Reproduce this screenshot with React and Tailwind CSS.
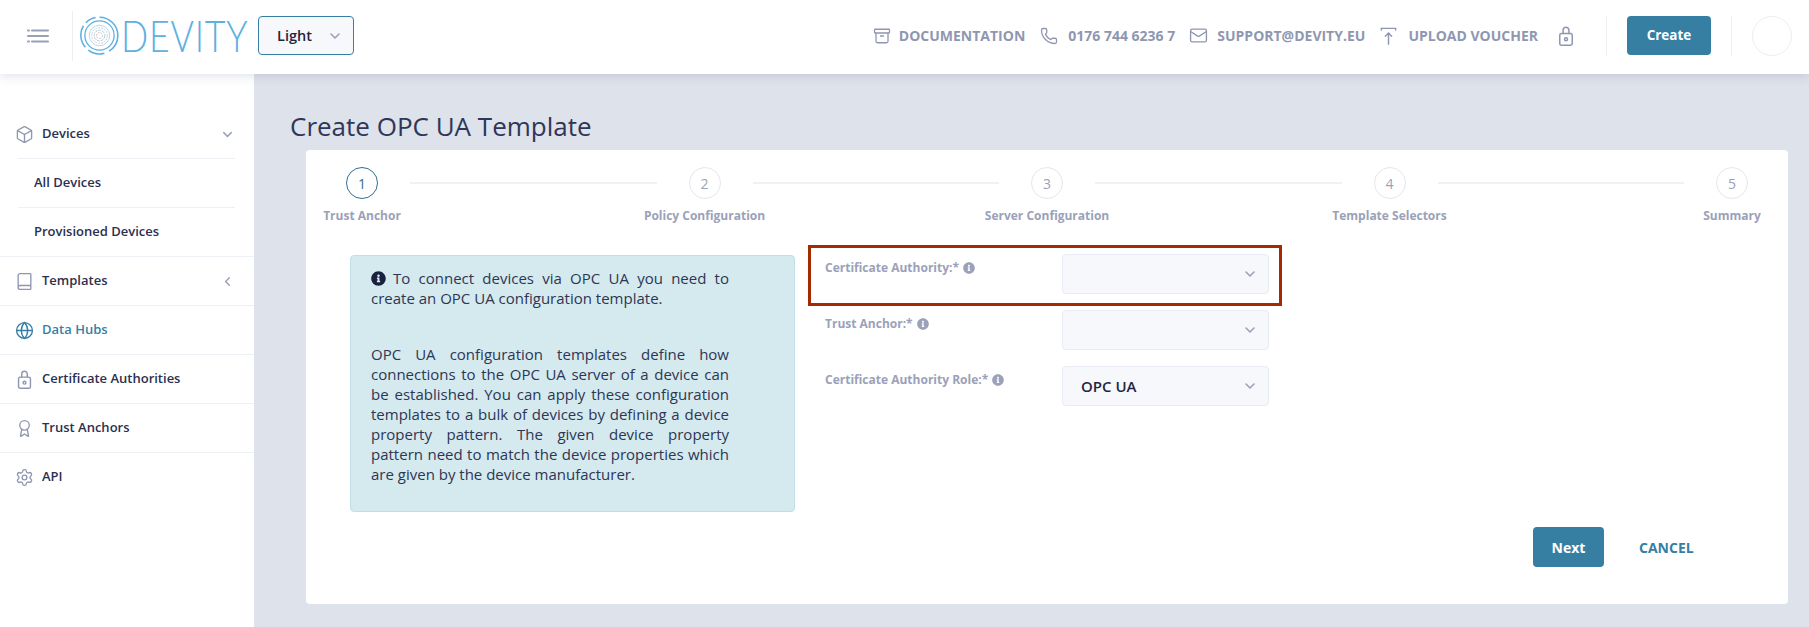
import { Archive, Award, Book, Box, ChevronDown, ChevronLeft, Globe, Mail, Phone, Settings } from 'lucide-react';
import { FaInfoCircle } from 'react-icons/fa';

const navItems = [
  { label: 'Templates', icon: Book, caret: true },
  { label: 'Data Hubs', icon: Globe, active: true },
  { label: 'Certificate Authorities', icon: LockIcon },
  { label: 'Trust Anchors', icon: Award },
  { label: 'API', icon: Settings, last: true },
];

const steps = ['Trust Anchor', 'Policy Configuration', 'Server Configuration', 'Template Selectors', 'Summary'];

function LockIcon({ className }) {
  return (
    <svg viewBox="0 0 24 24" fill="none" stroke="currentColor" strokeWidth="1.8" strokeLinecap="round" strokeLinejoin="round" className={className}>
      <rect x="4.5" y="9" width="15" height="14" rx="2" />
      <path d="M8.5 9V5a3.5 3.5 0 0 1 7 0v4" />
      <circle cx="12" cy="16" r="1.8" />
    </svg>
  );
}

function UploadIcon({ className }) {
  return (
    <svg viewBox="0 0 24 24" fill="none" stroke="currentColor" strokeWidth="1.8" strokeLinecap="round" strokeLinejoin="round" className={className}>
      <path d="M3 3h18" />
      <path d="M3 3v2M21 3v2" />
      <path d="M12 23V9" />
      <path d="M8 13l4-4 4 4" />
    </svg>
  );
}

function MenuIcon() {
  return (
    <svg viewBox="0 0 22 14" className="h-[14px] w-[22px]" fill="none" stroke="#98a0b8" strokeWidth="2" strokeLinecap="round">
      <path d="M1 1.5h1M5 1.5h16M1 7h20M1 12.5h1M5 12.5h16" />
    </svg>
  );
}

function LogoMark() {
  return (
    <svg viewBox="0 0 40 40" className="h-[39px] w-[39px] shrink-0" fill="none" stroke="#5cb0e2">
      <path d="M20 1.2a18.8 18.8 0 0 1 18.8 18.8a18.8 18.8 0 0 1-9 16" strokeWidth="1.6" />
      <path d="M25 38.1a18.8 18.8 0 0 1-16.5-3" strokeWidth="1.6" />
      <path d="M5.5 32a18.8 18.8 0 0 1-2-22" strokeWidth="1.6" />
      <path d="M6 7a18.8 18.8 0 0 1 10-5.4" strokeWidth="1.6" />
      <circle cx="20" cy="20" r="15" strokeWidth="1.3" />
      <circle cx="20" cy="20" r="10.5" stroke="#b7d6e8" strokeWidth="1" />
      <circle cx="20" cy="20" r="8" stroke="#c9cfd8" strokeWidth="1" strokeDasharray="2 1" />
      <circle cx="20" cy="20" r="5.5" stroke="#9fcbe4" strokeWidth="1" strokeDasharray="3 1" />
      <circle cx="20" cy="20" r="3" stroke="#d4b8b8" strokeWidth="1" strokeDasharray="2 1" />
    </svg>
  );
}

function SelectBox({ value }) {
  return (
    <div className="flex h-[40px] w-[207px] items-center justify-between rounded border border-[#e8ebf3] bg-[#f7f8fc] pl-[18px] pr-[10px]">
      <span className="text-[15px] font-semibold text-[#1f2540]">{value}</span>
      <ChevronDown className="h-[16px] w-[16px] text-[#9aa1b9]" strokeWidth={2.4} />
    </div>
  );
}

function FieldLabel({ children }) {
  return (
    <div className="flex w-[237px] items-center gap-[4px] self-start pt-[5px] text-[12px] font-bold leading-[18px] text-[#9aa1b9]">
      {children}
      <FaInfoCircle className="h-[12px] w-[12px]" />
    </div>
  );
}

export default function App() {
  return (
    <div className="flex h-[627px] w-[1809px] flex-col overflow-hidden bg-[#dee2ea] font-['Open_Sans',sans-serif]">
      <header className="relative z-10 flex h-[74px] shrink-0 items-center bg-white pb-[3px] pl-[27px] pr-[17px] shadow-[0_2px_10px_rgba(80,90,120,0.18)]">
        <MenuIcon />
        <div className="ml-[23px] h-[50px] w-px bg-[#eceef4]" />
        <div className="ml-[7px] flex items-center">
          <LogoMark />
          <span className="ml-[2px] w-[127px] origin-left scale-x-[0.83] whitespace-nowrap font-['Lato',sans-serif] text-[43px] font-light leading-none tracking-[1px] text-[#5cb0e2]">DEVITY</span>
        </div>
        <div className="ml-[10px] flex h-[39px] w-[96px] items-center justify-between rounded border border-[#367fa3] bg-[#f7f8fc] pl-[18px] pr-[10px]">
          <span className="text-[14.5px] font-semibold text-[#1f2540]">Light</span>
          <ChevronDown className="h-[16px] w-[16px] text-[#9aa1b9]" strokeWidth={2.4} />
        </div>
        <div className="ml-auto flex items-center text-[14px] font-bold text-[#8f97b0]">
          <Archive className="h-[18px] w-[18px]" strokeWidth={1.7} />
          <span className="ml-[8px]">DOCUMENTATION</span>
          <Phone className="ml-[15px] h-[18px] w-[18px]" strokeWidth={1.7} />
          <span className="ml-[10px]">0176 744 6236 7</span>
          <Mail className="ml-[14px] h-[19px] w-[19px]" strokeWidth={1.7} />
          <span className="ml-[9px]">SUPPORT@DEVITY.EU</span>
          <UploadIcon className="ml-[14px] h-[19px] w-[19px]" />
          <span className="ml-[10px]">UPLOAD VOUCHER</span>
          <LockIcon className="ml-[18px] h-[20px] w-[20px]" />
        </div>
        <div className="ml-[30px] h-[40px] w-px bg-[#eceef4]" />
        <button className="ml-[20px] h-[39px] w-[84px] rounded bg-[#367fa3] text-[13.5px] font-bold text-white">Create</button>
        <div className="ml-[20px] h-[40px] w-px bg-[#eceef4]" />
        <div className="ml-[20px] h-[40px] w-[40px] rounded-full border border-[#eceef4]" />
      </header>

      <div className="flex min-h-0 flex-1">
        <aside className="w-[254px] shrink-0 bg-white pt-[36px] text-[13px] font-semibold text-[#2a304f]">
          <div className="flex h-[48px] items-center pl-[15px] pr-[19px]">
            <Box className="h-[19px] w-[19px] text-[#8f97b0]" strokeWidth={1.7} />
            <span className="ml-[8px] flex-1">Devices</span>
            <ChevronDown className="h-[15px] w-[15px] text-[#9aa1b9]" strokeWidth={2.4} />
          </div>
          <div className="ml-[18px] mr-[19px] border-t border-[#eef0f5]" />
          <div className="flex h-[48px] items-center pl-[34px]">All Devices</div>
          <div className="ml-[18px] mr-[19px] border-t border-[#eef0f5]" />
          <div className="flex h-[48px] items-center pl-[34px]">Provisioned Devices</div>
          {navItems.map((item) => (
            <div key={item.label} className="border-t border-[#eef0f5]">
              <div className={`flex h-[48px] items-center pl-[15px] pr-[19px] ${item.active ? 'text-[#367fa3]' : ''}`}>
                <item.icon className={`h-[19px] w-[19px] ${item.active ? 'text-[#367fa3]' : 'text-[#8f97b0]'}`} strokeWidth={1.7} />
                <span className="ml-[8px] flex-1">{item.label}</span>
                {item.caret && <ChevronLeft className="h-[15px] w-[15px] text-[#9aa1b9]" strokeWidth={2.4} />}
              </div>
            </div>
          ))}
        </aside>

        <main className="min-w-0 flex-1 pl-[36px] pr-[21px] pt-[35px]">
          <h1 className="text-[26px] font-normal leading-[34px] text-[#2f3659]">Create OPC UA Template</h1>
          <section className="ml-[16px] mt-[7px] h-[454px] rounded bg-white">
            <div className="flex px-[8px] pt-[17px]">
              {steps.map((step, i) => (
                <div key={step} className="contents">
                  <div className="flex w-[96px] flex-col items-center">
                    <div className={`flex h-[32px] w-[32px] items-center justify-center rounded-full border bg-white text-[14px] ${i === 0 ? 'border-[#2f6f95] text-[#2f6f95]' : 'border-[#e4e7f0] text-[#9aa1b9]'}`}>
                      {i + 1}
                    </div>
                    <span className="mt-[8px] whitespace-nowrap text-[12px] font-bold leading-[18px] text-[#9aa1b9]">{step}</span>
                  </div>
                  {i < steps.length - 1 && <div className="mt-[15px] h-[2px] flex-1 bg-[#eef1f6]" />}
                </div>
              ))}
            </div>

            <div className="flex items-start pl-[44px] pt-[30px]">
              <div className="h-[257px] w-[445px] rounded border border-[#bfe0e6] bg-[#d4eaef] pl-[20px] pr-[65px] pt-[12px] text-justify text-[15px] leading-[20px] text-[#2f3553]">
                <p>
                  <FaInfoCircle className="mr-[7px] inline h-[15px] w-[15px] align-[-2px] text-[#1a2140]" />
                  To connect devices via OPC UA you need to create an OPC UA configuration template.
                </p>
                <p className="mt-[36px]">
                  OPC UA configuration templates define how connections to the OPC UA server of a device can be established. You can apply these configuration templates to a bulk of devices by defining a device property pattern. The given device property pattern need to match the device properties which are given by the device manufacturer.
                </p>
              </div>

              <div className="relative ml-[30px] mt-[-1px] flex flex-col gap-[16px]">
                <div className="flex items-center">
                  <FieldLabel>Certificate Authority:*</FieldLabel>
                  <SelectBox />
                </div>
                <div className="flex items-center">
                  <FieldLabel>Trust Anchor:*</FieldLabel>
                  <SelectBox />
                </div>
                <div className="flex items-center">
                  <FieldLabel>Certificate Authority Role:*</FieldLabel>
                  <SelectBox value="OPC UA" />
                </div>
                <div className="absolute left-[-17px] top-[-9px] h-[61px] w-[474px] border-[3px] border-[#a52a00]" />
              </div>
            </div>

            <div className="mt-[15px] flex items-center pl-[1227px]">
              <button className="h-[40px] w-[71px] rounded bg-[#367fa3] text-[14px] font-bold text-white">Next</button>
              <span className="ml-[35px] text-[14px] font-bold text-[#367fa3]">CANCEL</span>
            </div>
          </section>
        </main>
      </div>
    </div>
  );
}
